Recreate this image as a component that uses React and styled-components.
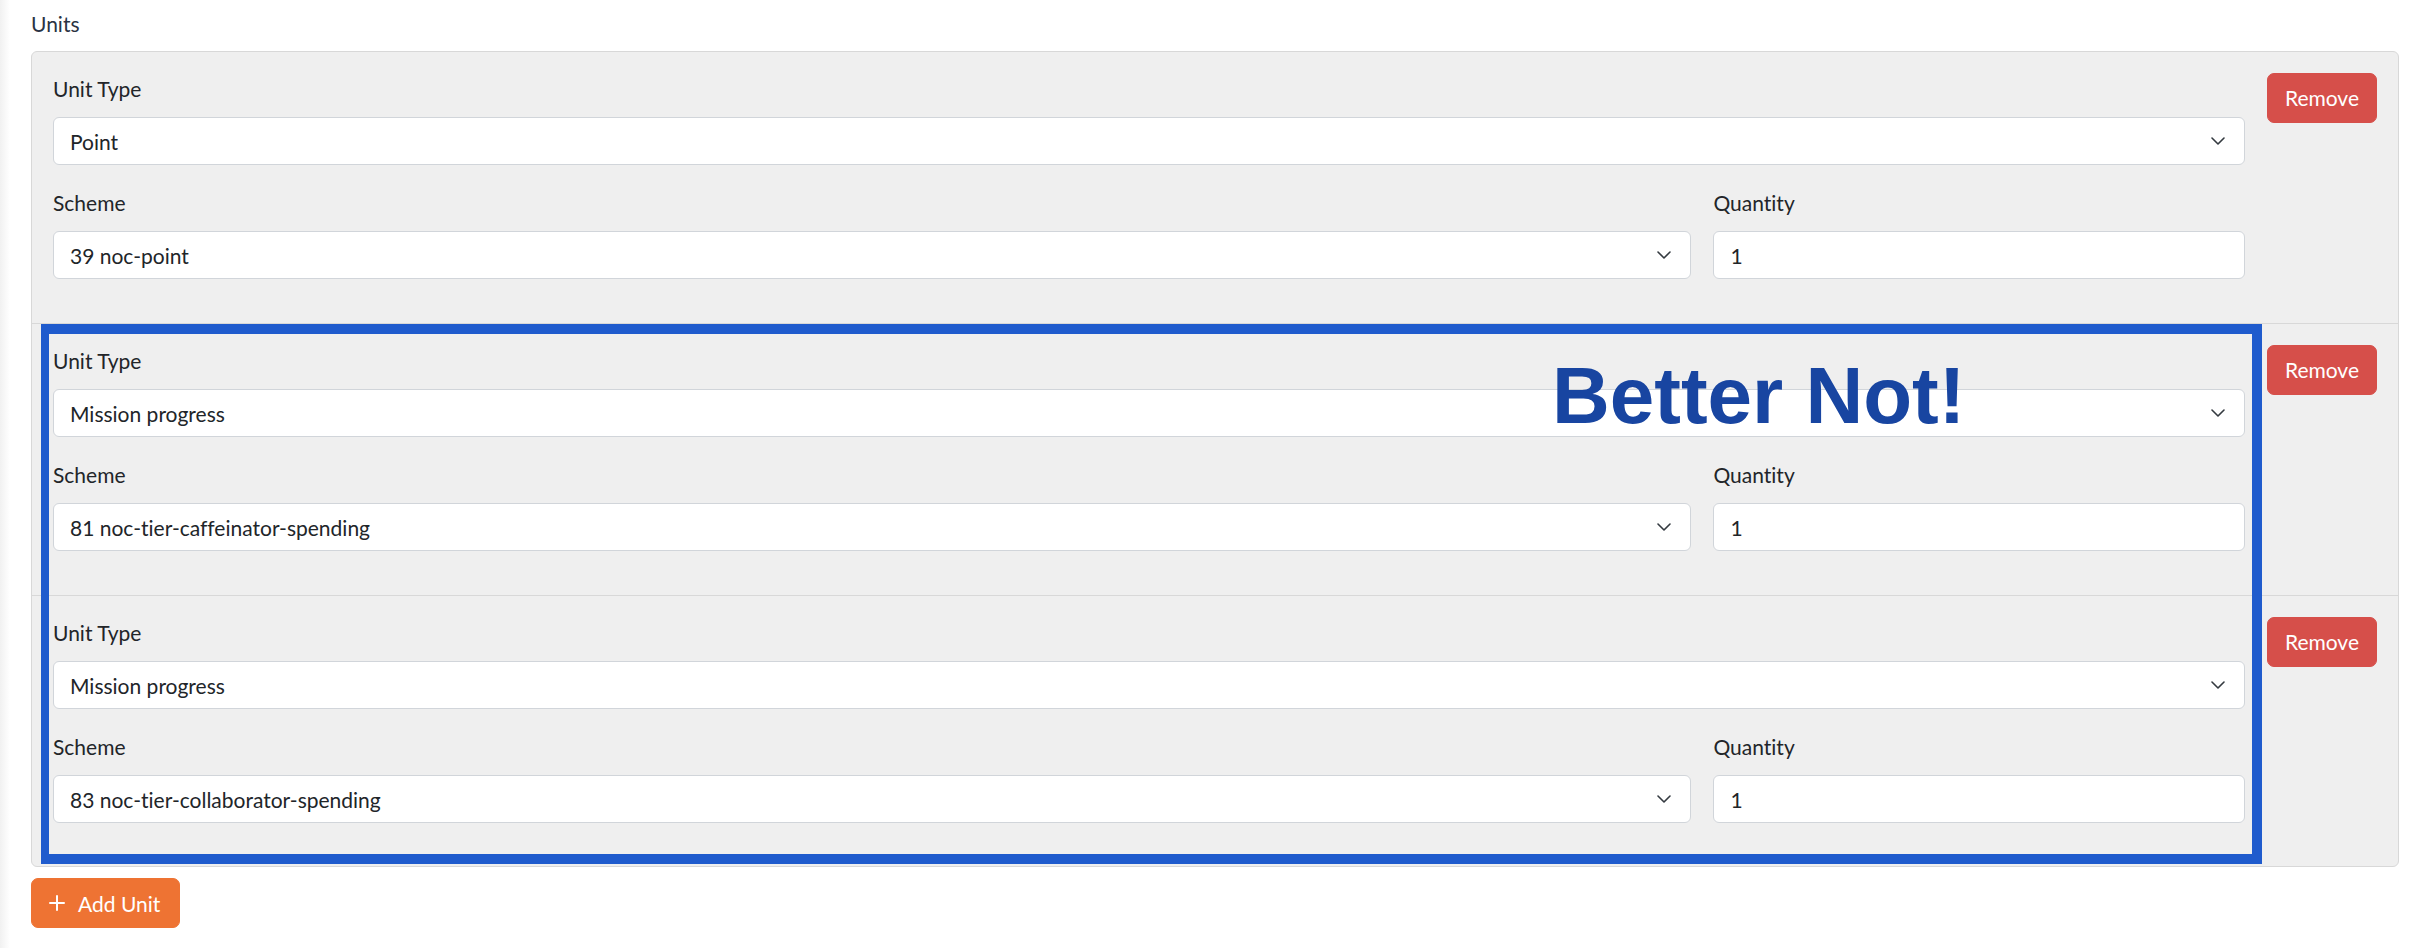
import React from "react";
import styled, { createGlobalStyle } from "styled-components";

const GlobalStyle = createGlobalStyle`
  html, body { margin: 0; padding: 0; background: #ffffff; }
  body {
    font-family: "Lato", "Noto Sans", sans-serif;
    font-variant-ligatures: no-common-ligatures;
  }
  * { box-sizing: border-box; }
`;

const Page = styled.div`
  min-height: 948px;
  padding: 8px 25px 20px 31px;
  background: linear-gradient(90deg, #f1f1f1 0px, #f8f8f8 5px, #ffffff 10px);
`;

const Heading = styled.div`
  font-size: 21px;
  line-height: 32px;
  color: #2a3343;
  margin-bottom: 11px;
`;

const Panel = styled.div`
  position: relative;
  background: #efefef;
  border: 1px solid #d8d8d8;
  border-radius: 6px;
`;

const UnitRow = styled.div`
  display: flex;
  align-items: flex-start;
  gap: 22px;
  padding: 21px 21px 22px 21px;
  & + & {
    border-top: 1px solid #d8d8d8;
  }
  &:nth-last-child(2) {
    padding-bottom: 21px;
  }
`;

const Fields = styled.div`
  flex: 1;
  min-width: 0;
`;

const FieldGrid = styled.div`
  display: grid;
  grid-template-columns: calc(75% - 5.5px) 1fr;
  column-gap: 22px;
`;

const FieldGroup = styled.div`
  margin-bottom: 22px;
  min-width: 0;
`;

const Label = styled.label`
  display: block;
  font-size: 21px;
  line-height: 32px;
  color: #222529;
  margin-bottom: 12px;
`;

const SelectWrap = styled.div`
  position: relative;
`;

const controlStyles = `
  display: block;
  width: 100%;
  height: 48px;
  border: 1px solid #d1d5da;
  border-radius: 6px;
  background: #ffffff;
  font-family: "Lato", "Noto Sans", sans-serif;
  font-variant-ligatures: no-common-ligatures;
  font-size: 21px;
  color: #212529;
  outline: none;
`;

const Select = styled.select`
  ${controlStyles}
  appearance: none;
  -webkit-appearance: none;
  padding: 0 48px 0 16px;
`;

const TextInput = styled.input`
  ${controlStyles}
  padding: 0 16px;
`;

const Chevron = styled.svg`
  position: absolute;
  right: 20px;
  top: 50%;
  transform: translateY(-50%);
  pointer-events: none;
`;

const RemoveButton = styled.button`
  flex: none;
  height: 50px;
  padding: 0 17px;
  border: 1px solid #d64f4a;
  border-radius: 7px;
  background: #d64f4a;
  color: #ffffff;
  font-family: "Lato", "Noto Sans", sans-serif;
  font-size: 21px;
  line-height: 48px;
  cursor: pointer;
`;

const AddButton = styled.button`
  margin-top: 11px;
  height: 50px;
  display: inline-flex;
  align-items: center;
  gap: 13px;
  padding: 0 19px 0 17px;
  border: 1px solid #ee7333;
  border-radius: 7px;
  background: #ee7333;
  color: #ffffff;
  font-family: "Lato", "Noto Sans", sans-serif;
  font-size: 21px;
  cursor: pointer;
`;

const Annotation = styled.div`
  position: absolute;
  left: 9px;
  top: 272px;
  width: 2221px;
  height: 540px;
  border: 10px solid #1f5bcd;
  border-left-width: 8px;
  pointer-events: none;
`;

const AnnotationText = styled.div`
  position: absolute;
  left: 1503px;
  top: 22px;
  font-family: "Liberation Sans", Arial, sans-serif;
  font-weight: 700;
  font-size: 80px;
  line-height: 1;
  letter-spacing: 0;
  color: #1845a1;
  white-space: nowrap;
`;

const ChevronIcon = () => (
  <Chevron width="14" height="8" viewBox="0 0 14 8" fill="none">
    <path d="M1 1 L7 7 L13 1" stroke="#343a40" strokeWidth="1.6" strokeLinecap="round" strokeLinejoin="round" />
  </Chevron>
);

const PlusIcon = () => (
  <svg width="16" height="16" viewBox="0 0 16 16" fill="none">
    <path d="M8 1 V15 M1 8 H15" stroke="#ffffff" strokeWidth="2" strokeLinecap="round" />
  </svg>
);

const SelectField = ({ value }) => (
  <SelectWrap>
    <Select value={value} onChange={() => {}}>
      <option value={value}>{value}</option>
    </Select>
    <ChevronIcon />
  </SelectWrap>
);

const units = [
  { type: "Point", scheme: "39 noc-point", qty: "1" },
  { type: "Mission progress", scheme: "81 noc-tier-caffeinator-spending", qty: "1" },
  { type: "Mission progress", scheme: "83 noc-tier-collaborator-spending", qty: "1" },
];

export default function App() {
  return (
    <>
      <GlobalStyle />
      <Page>
        <Heading>Units</Heading>
        <Panel>
          {units.map((u, i) => (
            <UnitRow key={i}>
              <Fields>
                <FieldGroup>
                  <Label>Unit Type</Label>
                  <SelectField value={u.type} />
                </FieldGroup>
                <FieldGrid>
                  <FieldGroup>
                    <Label>Scheme</Label>
                    <SelectField value={u.scheme} />
                  </FieldGroup>
                  <FieldGroup>
                    <Label>Quantity</Label>
                    <TextInput type="text" value={u.qty} readOnly />
                  </FieldGroup>
                </FieldGrid>
              </Fields>
              <RemoveButton type="button">Remove</RemoveButton>
            </UnitRow>
          ))}
          <Annotation>
            <AnnotationText>Better Not!</AnnotationText>
          </Annotation>
        </Panel>
        <AddButton type="button">
          <PlusIcon />
          Add Unit
        </AddButton>
      </Page>
    </>
  );
}
